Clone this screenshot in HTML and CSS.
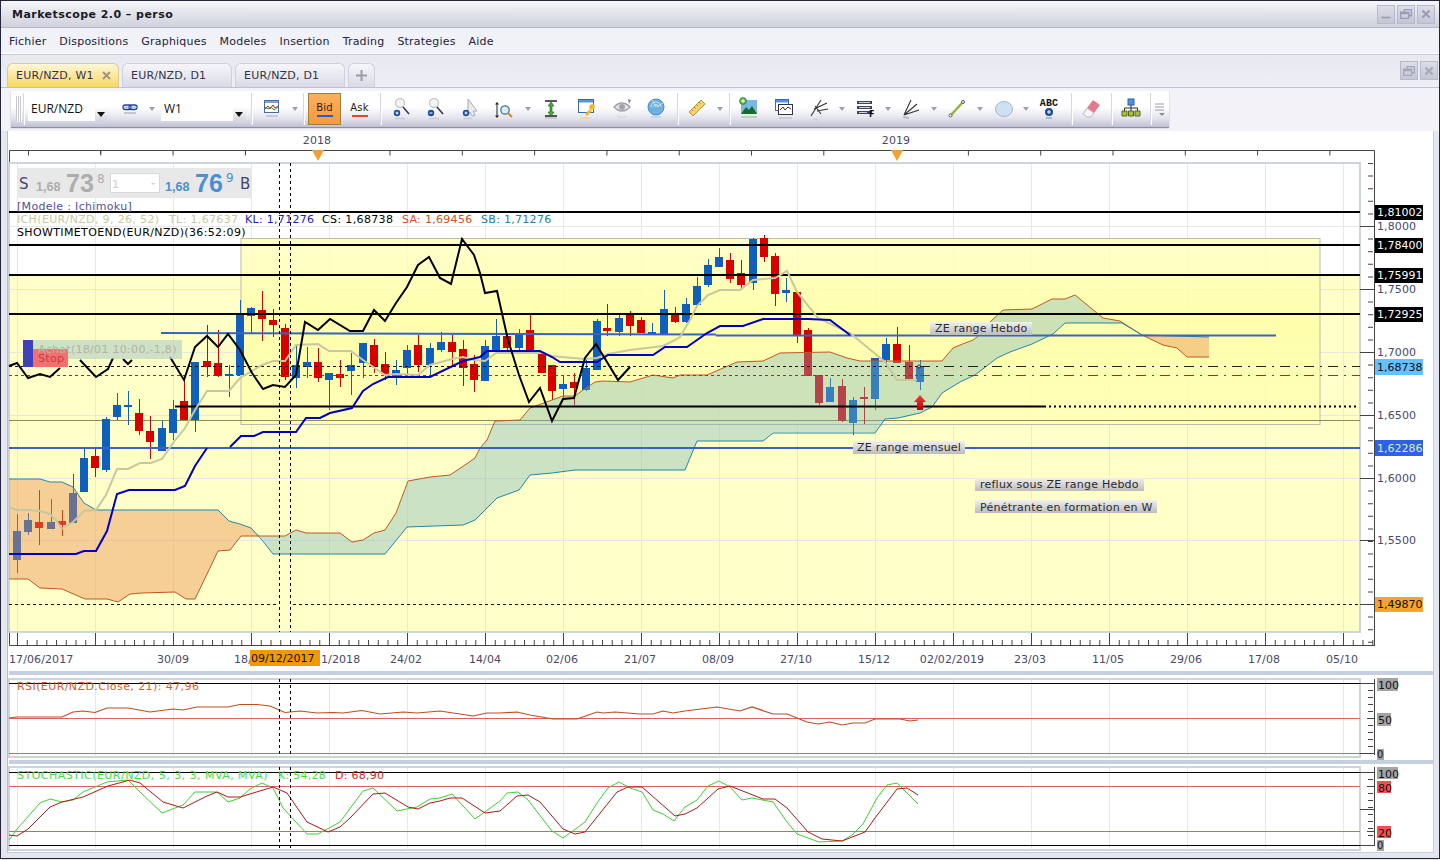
FILE: index.html
```html
<!DOCTYPE html>
<html lang="fr">
<head>
    <meta charset="UTF-8">
    <title>Marketscope 2.0 - perso</title>
    <link rel="stylesheet" href="styles.css">
</head>
<body>
<div class="window">
    <div class="titlebar">
        <span class="title">Marketscope 2.0 – perso</span>
        <div class="win-btns">
            <div class="win-btn"><svg width="18" height="18" viewBox="0 0 18 18"><path d="M4 12h10v2H4z" fill="#9a9db4"/></svg></div>
            <div class="win-btn"><svg width="18" height="18" viewBox="0 0 18 18"><path d="M7 6V4h8v7h-3M3 7h9v7H3zM3 8.500h9" fill="none" stroke="#9a9db4" stroke-width="1.500"/></svg></div>
            <div class="win-btn"><svg width="18" height="18" viewBox="0 0 18 18"><path d="M5 5l8 8M13 5l-8 8" stroke="#9a9db4" stroke-width="2.500"/></svg></div>
        </div>
    </div>

    <div class="menubar">
        <span>Fichier</span><span>Dispositions</span><span>Graphiques</span><span>Modeles</span><span>Insertion</span><span>Trading</span><span>Strategies</span><span>Aide</span>
    </div>

    <div class="tabstrip">
        <div class="tab active">EUR/NZD, W1<svg class="tab-close" width="9" height="9" viewBox="0 0 9 9"><path d="M1 1l7 7M8 1L1 8" stroke="#9c9488" stroke-width="2"/></svg></div>
        <div class="tab">EUR/NZD, D1</div>
        <div class="tab">EUR/NZD, D1</div>
        <div class="tab tab-add"><svg width="13" height="13" viewBox="0 0 13 13"><path d="M6.500 1v11M1 6.500h11" stroke="#9a9aa8" stroke-width="2"/></svg></div>
        <div class="win-btns">
            <div class="win-btn"><svg width="18" height="18" viewBox="0 0 18 18"><path d="M7 6V4h8v7h-3M3 7h9v7H3zM3 8.500h9" fill="none" stroke="#a4a7ba" stroke-width="1.500"/></svg></div>
            <div class="win-btn"><svg width="18" height="18" viewBox="0 0 18 18"><path d="M5 5l8 8M13 5l-8 8" stroke="#a4a7ba" stroke-width="2.500"/></svg></div>
        </div>
    </div>

    <div class="toolstrip">
        <div class="toolbar">
            <div class="grip"></div>
            <div class="tb-sep"></div>
            <div class="combo combo-pair"><span>EUR/NZD</span><i class="combo-arrow"></i></div>
            <div class="tb-cell"><svg width="20" height="20" viewBox="0 0 20 20"><g fill="none" stroke="#27408b" stroke-width="1.300"><rect x="3" y="6" width="8" height="4.500" rx="2.200"/><rect x="9" y="6" width="8" height="4.500" rx="2.200"/></g><path d="M3 8.200h14" stroke="#7fa0d0"/><path d="M4 14h12" stroke="#c4c6d4" stroke-width="2"/></svg></div>
            <div class="tb-cell"><i class="caret"></i></div>
            <div class="combo combo-period"><span>W1</span><i class="combo-arrow"></i></div>
            <div class="tb-sep"></div>
            <div class="tb-cell"><svg width="20" height="22" viewBox="0 0 20 22"><rect x="2.500" y="2.500" width="14" height="12" fill="#fff" stroke="#4a6aa8"/><path d="M3 3h13v2H3z" fill="#7fa0d8"/><path d="M3 11l3-3 2 3 3-4 2 3 3-2" fill="none" stroke="#d02020"/><path d="M3 9l3 2 3-2 3 3 4-3" fill="none" stroke="#20a020"/><path d="M4 18h12" stroke="#c8cad8" stroke-width="2"/></svg></div>
            <div class="tb-cell"><i class="caret"></i></div>
            <div class="tb-sep"></div>
            <div class="price-btn active"><span>Bid</span><i class="price-bar bar-bid"></i></div>
            <div class="price-btn"><span>Ask</span><i class="price-bar bar-ask"></i></div>
            <div class="tb-sep"></div>

            <div class="tb-cell"><svg width="22" height="24" viewBox="0 0 22 24"><circle cx="10" cy="6" r="4.500" fill="#f4f4f6" stroke="#c8c8ce" stroke-width="1.400"/><path d="M13 10l6 7" stroke="#3a3a40" stroke-width="1.600"/><circle cx="7" cy="16" r="3.200" fill="#1c4c9c"/><path d="M7 14.500v3M5.500 16h3" stroke="#fff"/><path d="M5 21.500h10" stroke="#c8cad8" stroke-width="1.500"/></svg></div>
            <div class="tb-cell"><svg width="22" height="24" viewBox="0 0 22 24"><circle cx="10" cy="6" r="4.500" fill="#f4f4f6" stroke="#c8c8ce" stroke-width="1.400"/><path d="M13 10l6 7" stroke="#3a3a40" stroke-width="1.600"/><circle cx="7" cy="16" r="3.200" fill="#1c4c9c"/><path d="M5.500 16h3" stroke="#fff"/><path d="M5 21.500h10" stroke="#c8cad8" stroke-width="1.500"/></svg></div>
            <div class="tb-cell"><svg width="22" height="24" viewBox="0 0 22 24"><path d="M9 2l9 12h-4l2 4-3 1-2-4-2 3z" fill="#ececf0" stroke="#a8a8b0"/><circle cx="7" cy="16" r="3.200" fill="#1c4c9c"/><path d="M7 14.500v3M5.500 16h3" stroke="#fff"/><path d="M5 21.500h8" stroke="#c8cad8" stroke-width="1.500"/></svg></div>
            <div class="tb-cell"><svg width="22" height="24" viewBox="0 0 22 24"><path d="M4 6v14" stroke="#222"/><path d="M2 7.500L4 5l2 2.500zM2 18.500L4 21l2-2.500z" fill="#222"/><circle cx="12" cy="13" r="4.200" fill="#d8eef0" stroke="#487888" stroke-width="1.300"/><path d="M15 16l4 4" stroke="#d08820" stroke-width="2"/></svg></div>
            <div class="tb-cell"><i class="caret"></i></div>
            <div class="tb-cell"><svg width="22" height="24" viewBox="0 0 22 24"><path d="M5 4h12M5 19h12" stroke="#222" stroke-width="1.600"/><path d="M11 5l3 4h-2v6h2l-3 4-3-4h2V9H8z" fill="#48a838" stroke="#206018" stroke-width=".6"/><path d="M5 21h12" stroke="#c8cad8" stroke-width="2"/></svg></div>
            <div class="tb-cell"><svg width="22" height="24" viewBox="0 0 22 24"><rect x="2.500" y="2.500" width="15" height="13" fill="#fff" stroke="#3868b8"/><path d="M3 3h14v2.500H3z" fill="#5c90e0"/><circle cx="16" cy="10" r="2.800" fill="#f0b820"/><path d="M14 12l-5 5 2 2 5-5" fill="#f0b820"/><path d="M4 21h10" stroke="#e8d8b0" stroke-width="2"/></svg></div>
            <div class="tb-cell"><svg width="22" height="24" viewBox="0 0 22 24"><path d="M2 10q8-8 16 0-8 8-16 0z" fill="#e8e8ec" stroke="#a0a0a8" stroke-width="1.400"/><circle cx="10" cy="10" r="3" fill="#a4a4ac"/><path d="M16 2l3 1-2 4" fill="#888"/><path d="M5 19q5 3 10 0" fill="none" stroke="#d8d8e0" stroke-width="1.500"/></svg></div>
            <div class="tb-cell"><svg width="22" height="24" viewBox="0 0 22 24"><circle cx="11" cy="10" r="8" fill="#70b0e0" stroke="#4c8cc0"/><path d="M11 10l7-4M11 10l-4-7M6 10a5 5 0 0 1 10 0M8.500 10a2.500 2.500 0 0 1 5 0" fill="none" stroke="#c4e0f4"/><path d="M6 20h10" stroke="#bcd8ec" stroke-width="2"/></svg></div>
            <div class="tb-sep"></div>

            <div class="tb-cell"><svg width="22" height="24" viewBox="0 0 22 24"><path d="M15 3l4 4L7 19l-4-4z" fill="#f4d468" stroke="#b89838"/><path d="M13 5l1.500 1.500M10.500 7.500L12 9M8 10l1.500 1.500M5.500 12.500L7 14" stroke="#a08020"/></svg></div>
            <div class="tb-cell"><i class="caret"></i></div>
            <div class="tb-sep"></div>
            <div class="tb-cell"><svg width="22" height="24" viewBox="0 0 22 24"><rect x="3" y="3" width="16" height="14" fill="#78b8e8"/><path d="M3 17l5-7 3 3 3-4 5 8z" fill="#186c28"/><circle cx="5" cy="4" r="3.500" fill="#50b840" stroke="#287820" stroke-width=".6"/><path d="M5 2v4M3 4h4" stroke="#fff"/><path d="M3 20h16" stroke="#b8d0b8" stroke-width="2"/></svg></div>
            <div class="tb-cell"><svg width="22" height="24" viewBox="0 0 22 24"><rect x="2.500" y="2.500" width="13" height="11" fill="#fff" stroke="#3868b8"/><path d="M3 3h12v2.500H3z" fill="#5c90e0"/><rect x="5.500" y="7.500" width="14" height="10" fill="#fff" stroke="#334"/><path d="M7 13l3-3 2 3 3-3 3 2" fill="none" stroke="#334"/><path d="M6 21h13" stroke="#c8cad8" stroke-width="2"/></svg></div>
            <div class="tb-cell"><svg width="22" height="24" viewBox="0 0 22 24"><path d="M3 19L13 3M6 12L19 6M9 14L20 12M7 9l6 8" stroke="#333" stroke-width="1.100" fill="none"/><path d="M6 22l4 1" stroke="#c8cad8" stroke-width="1.500"/></svg></div>
            <div class="tb-cell"><i class="caret"></i></div>
            <div class="tb-cell"><svg width="22" height="24" viewBox="0 0 22 24"><path d="M2 4h15v3H2zM2 9h15v3H2zM2 14h15v3H2z" fill="#3c4858"/><path d="M4 5.500h11M4 10.500h11M4 15.500h8" stroke="#c8d0d8"/><text class="icon-letter" x="14" y="20">F</text></svg></div>
            <div class="tb-cell"><i class="caret"></i></div>
            <div class="tb-cell"><svg width="22" height="24" viewBox="0 0 22 24"><path d="M4 18L11 3M4 18L17 7M4 18L19 13" stroke="#333" stroke-width="1.100" fill="none"/><path d="M3 20l6 1" stroke="#b8bac8" stroke-width="2"/></svg></div>
            <div class="tb-cell"><i class="caret"></i></div>
            <div class="tb-cell"><svg width="22" height="24" viewBox="0 0 22 24"><path d="M5 18L17 5" stroke="#8cb830" stroke-width="2.400"/><circle cx="4.500" cy="18.500" r="1.500" fill="#fff" stroke="#555"/><circle cx="17" cy="5" r="1.500" fill="#fff" stroke="#555"/></svg></div>
            <div class="tb-cell"><i class="caret"></i></div>
            <div class="tb-cell"><svg width="22" height="24" viewBox="0 0 22 24"><ellipse cx="11" cy="12" rx="8.500" ry="7.500" fill="#cfe0f2" stroke="#a4b8d0"/></svg></div>
            <div class="tb-cell"><i class="caret"></i></div>
            <div class="tb-cell"><svg width="22" height="24" viewBox="0 0 22 24"><text class="icon-abc" x="11" y="9">ABC</text><circle cx="11" cy="15" r="4" fill="#1c4c9c"/><path d="M11 13v4M9 15h4" stroke="#fff"/><path d="M8 21h6" stroke="#a8b8d8" stroke-width="2"/></svg></div>
            <div class="tb-sep"></div>
            <div class="tb-cell"><svg width="22" height="24" viewBox="0 0 22 24"><path d="M13 3l7 5-6 8-7-5z" fill="#e87890"/><path d="M7 11l7 5-3 4H7l-4-3z" fill="#f4f4f4" stroke="#b8b8c0"/></svg></div>
            <div class="tb-sep"></div>
            <div class="tb-cell"><svg width="22" height="24" viewBox="0 0 22 24"><rect x="8" y="2" width="6" height="6" fill="#4c94e0" stroke="#2860a8"/><path d="M11 8v3M4.500 14v-3h13v3M11 11v3" fill="none" stroke="#333"/><path d="M2 14h5v5H2zM8.500 14h5v5h-5zM15 14h5v5h-5z" fill="#a8c038" stroke="#586818"/></svg></div>
            <div class="tb-sep"></div>
            <div class="tb-cell"><svg width="12" height="16" viewBox="0 0 12 16"><path d="M1 3h9M1 6h9M1 9h9" stroke="#9a9aa4"/><path d="M5 12h6l-3 3z" fill="#8a8a96"/></svg></div>
        </div>
    </div>

    <div class="charts">
        <svg class="chart chart-main" width="1424" height="540" viewBox="8 131 1424 540">
            <defs>
                <linearGradient id="zoneFill" x1="0" y1="0" x2="0" y2="1">
                    <stop offset="0" stop-color="#ffffc0" stop-opacity=".85"/>
                    <stop offset=".5" stop-color="#ffffa8" stop-opacity=".85"/>
                    <stop offset="1" stop-color="#ffffb8" stop-opacity=".85"/>
                </linearGradient>
                <linearGradient id="labelFill" x1="0" y1="0" x2="0" y2="1">
                    <stop offset="0" stop-color="#f0f0f0"/>
                    <stop offset="1" stop-color="#bcbcbc"/>
                </linearGradient>
                <linearGradient id="arrowFill" x1="0" y1="0" x2="0" y2="1">
                    <stop offset="0" stop-color="#f04040"/>
                    <stop offset="1" stop-color="#b80000"/>
                </linearGradient>
            </defs>

            <!-- top time ruler -->
            <text class="axis-label" x="317" y="144" text-anchor="middle">2018</text>
            <text class="axis-label" x="896" y="144" text-anchor="middle">2019</text>
            <path class="axis" d="M9.500 162V150.500H1374.500V646"/>
            <line class="ticks" x1="28" y1="153" x2="1374" y2="153" stroke-dasharray="1 71.300"/>
            <path class="axis" d="M100.500 150v4M245.500 150v4"/>

            <!-- plot background -->
            <rect class="plot-bg" x="9" y="163" width="1351" height="469"/>
            <rect class="plot-yellow" x="9" y="274" width="1351" height="358"/>
            <path class="grid" d="M17.500 163V632M95.500 163V632M173.500 163V632M251.500 163V632M329.500 163V632M407.500 163V632M485.500 163V632M563.500 163V632M641.500 163V632M719.500 163V632M797.500 163V632M875.500 163V632M953.500 163V632M1031.500 163V632M1109.500 163V632M1187.500 163V632M1265.500 163V632M1343.500 163V632"/>
            <path class="grid" d="M9 226.500H1360M9 289.500H1360M9 352.500H1360M9 415.500H1360M9 478.500H1360M9 540.500H1360"/>
            <rect class="zone" x="241" y="238.500" width="1079" height="186"/>
            <rect class="plot-frame" x="9" y="163" width="1351" height="469"/>
            <line class="line-olive" x1="9" y1="420.500" x2="1360" y2="420.500"/>

            <!-- candles -->
            <path class="wick-blue" d="M17 514V573M28 513V535M51 499V529M73 474V523M84 448V492M106 417V472M117 393V420M128 391V425M162 421V451M173 400V440M195 362V432M229 365V397M240 300V375M251 307V333M296 345V388M307 347V378M329 373V410M351 353V395M363 343V378M396 360V385M407 345V378M430 343V378M441 332V352M485 340V381M496 319V351M519 329V353M563 375V400M586 360V391M597 319V370M619 315V336M652 323V335M664 290V335M686 298V323M697 277V305M708 259V287M719 248V267M753 238V290M786 278V302M830 378V402M853 397V435M875 358V410M886 338V366M920 360V390"/>
            <path class="wick-red" d="M39 490V545M62 510V536M95 449V477M139 399V435M150 416V459M184 380V420M207 325V377M218 330V377M262 291V341M273 309V337M285 324V380M318 348V382M340 360V387M374 339V373M385 352V380M418 335V372M452 335V365M463 340V386M474 355V392M507 336V350M530 315V350M542 354V373M552 365V400M574 373V405M607 304V336M630 311V336M641 317V333M675 307V323M730 253V283M741 260V290M764 235V262M775 253V306M797 292V343M808 328V376M819 375V405M842 379V422M864 387V424M897 327V363M909 345V380"/>
            <path class="body-blue" d="M13 531h8V560h-8zM24 520h8V532h-8zM47 522h8V529h-8zM69 493h8V523h-8zM80 458h8V492h-8zM102 419h8V470h-8zM113 405h8V417h-8zM124 405h8V407h-8zM158 428h8V451h-8zM169 409h8V433h-8zM191 362h8V420h-8zM225 374h8V376h-8zM236 314h8V375h-8zM247 308h8V316h-8zM292 365h8V378h-8zM303 362h8V367h-8zM325 373h8V380h-8zM347 365h8V371h-8zM359 343h8V363h-8zM392 370h8V376h-8zM403 350h8V368h-8zM426 348h8V365h-8zM437 342h8V350h-8zM481 346h8V381h-8zM492 336h8V351h-8zM515 334h8V348h-8zM559 384h8V389h-8zM582 368h8V390h-8zM593 321h8V370h-8zM615 318h8V332h-8zM648 332h8V335h-8zM660 309h8V335h-8zM682 304h8V322h-8zM693 286h8V305h-8zM704 265h8V285h-8zM715 257h8V267h-8zM749 239h8V283h-8zM782 290h8V293h-8zM826 387h8V402h-8zM849 400h8V423h-8zM871 358h8V399h-8zM882 344h8V360h-8zM916 367h8V382h-8z"/>
            <path class="body-red" d="M35 522h8V528h-8zM58 521h8V525h-8zM91 456h8V468h-8zM135 413h8V431h-8zM146 431h8V442h-8zM180 401h8V420h-8zM203 361h8V367h-8zM214 363h8V376h-8zM258 310h8V319h-8zM269 320h8V325h-8zM281 328h8V377h-8zM314 362h8V378h-8zM336 374h8V378h-8zM370 345h8V367h-8zM381 364h8V374h-8zM414 345h8V365h-8zM448 342h8V352h-8zM459 349h8V368h-8zM470 364h8V380h-8zM503 336h8V348h-8zM526 330h8V350h-8zM538 354h8V373h-8zM548 365h8V391h-8zM570 382h8V388h-8zM603 328h8V331h-8zM626 315h8V326h-8zM637 320h8V333h-8zM671 314h8V322h-8zM726 260h8V279h-8zM737 273h8V285h-8zM760 238h8V257h-8zM771 256h8V294h-8zM793 292h8V335h-8zM804 330h8V376h-8zM815 375h8V403h-8zM838 386h8V421h-8zM860 397h8V399h-8zM893 344h8V363h-8zM905 362h8V380h-8z"/>

            <!-- ichimoku cloud -->
            <path class="cloud-orange" d="M9 479H40L50 482H62L73 487L84 503L96 510H218L229 521L240 524L251 528L260 536L241 536L230 550L218 551L208 572L195 599H186L175 592L142 593L130 594L118 602L107 599H85L62 589L40 588L28 579H9Z"/>
            <path class="cloud-green" d="M260 536H285L296 530L306 533H340L352 542L363 540L374 533L385 530L396 513L408 481L430 477L450 475L462 467L475 458L480 448L487 440L495 421L520 420L530 408L563 396H575L583 390L595 382L603 381L630 382L653 375L673 378L680 375H707L737 362L763 361L780 353L830 352L847 358L860 361H942L953 348L960 345L973 340L977 337L990 322L1003 310L1032 309L1052 299H1065L1075 295L1103 318L1120 321L1142 335L1122 323H1065L1053 334L1032 344L1010 352L997 358L975 375L960 382L942 393L932 407L920 413L898 418L885 419L875 432H773L763 441H697L685 470H575L552 473L530 475L519 490L497 498L475 520L463 525L407 527L385 554H273Z"/>
            <path class="cloud-orange" d="M1142 335L1209 337V357H1187L1177 348L1163 345Z"/>
            <path class="line-sa" d="M9 579H28L40 588L62 589L85 599H107L118 602L130 594L142 593L175 592L186 599H195L208 572L218 551L230 550L241 536H285L296 530L306 533H340L352 542L363 540L374 533L385 530L396 513L408 481L430 477L450 475L462 467L475 458L480 448L487 440L495 421L520 420L530 408L563 396H575L583 390L595 382L603 381L630 382L653 375L673 378L680 375H707L737 362L763 361L780 353L830 352L847 358L860 361H942L953 348L960 345L973 340L977 337L990 322L1003 310L1032 309L1052 299H1065L1075 295L1103 318L1120 321L1142 335L1163 345L1177 348L1187 357H1209"/>
            <path class="line-sb" d="M9 479H40L50 482H62L73 487L84 503L96 510H218L229 521L240 524L251 528L262 540L273 554H385L407 527L463 525L475 520L497 498L519 490L530 475L552 473L575 470H685L697 441H763L773 433H875L885 419L898 418L920 413L932 407L942 393L960 382L975 375L997 358L1010 352L1032 344L1053 334L1065 323H1122L1142 335L1209 337"/>

            <!-- price levels -->
            <path class="level" d="M9 212H1360M9 245H1360M9 275H1360M9 314H1360"/>
            <path class="level" d="M175 406.500H1044"/>
            <line class="level-dots" x1="1044" y1="406.500" x2="1358" y2="406.500"/>
            <path class="level-blue" d="M161 333L716 334.500M716 335.500H1276M9 448H1360"/>
            <path class="dash-black" d="M9 366.500H920M9 604.500H276M293 604.500H1360"/>
            <path class="dash-red" d="M9 375.500H920"/>
            <path class="dashdot-black" d="M920 366.500H1360"/>
            <path class="dashdot-red" d="M920 375.500H1360"/>

            <path class="line-tl" d="M9 507L17 510H28L40 511L50 514L56 520L62 529L73 522L84 511L96 510L106 495L117 469H128L140 463H151L162 459L173 443L185 428L195 410L207 391H229L240 378L262 365L273 361H285L296 345L318 344L329 351H351L363 360L385 375L396 374L418 375L430 365L441 362L452 359L463 357L474 360L485 361L496 353H543L552 356L562 357L585 359L597 358L608 354L630 350L663 346L675 340L680 337L690 320L697 306L708 295L720 290H740L753 280L763 279L775 278L787 271L797 292L818 318L850 333L867 347L885 362L897 380H917"/>
            <path class="line-kl" d="M9 554H76L84 551H96L107 531L117 494L129 490H175L185 486L195 466L207 448M230 447L241 436H254L263 432H296L306 418H320L330 413L352 408L363 391L373 384L388 377H430L463 361L480 357L487 351H540L552 357L560 362H597L608 355H653L665 347H687L707 333L720 326H743L763 319H808L830 320L850 335"/>
            <path class="line-cs" d="M9 366L17 363L28 378L40 374L50 377L60 368M80 360L96 377L108 369L113 358M123 359L128 364L132 360M170 357L184 380L195 347L207 336L218 347L228 334L240 350L252 373L263 389L273 385L285 387L296 375L305 322L318 330L330 319L350 331H363L374 310L385 321L396 303L407 287L418 265L429 257L440 278L451 284L462 239L474 255L480 273L485 293L497 291L508 340L519 375L529 402L540 388L552 421L563 399L574 398L585 358L596 344L618 380L630 367"/>

            <path class="cursor" d="M279.500 163V632M290.500 163V632"/>

            <!-- order marker -->
            <rect class="order-tag" x="33" y="340" width="149" height="19"/>
            <rect class="order-bar" x="23" y="340" width="10" height="27"/>
            <rect class="order-stop" x="33" y="349" width="35" height="18"/>
            <text class="t-order" x="38" y="353">Achat(18/01 10:00,-1,8)</text>
            <text class="t-stop" x="38" y="362">Stop</text>

            <!-- trade widget -->
            <rect class="dealbox" x="17" y="168" width="235" height="30"/>
            <rect class="dealinput" x="110.500" y="173.500" width="49" height="19"/>
            <path class="dealcaret" d="M151 183h4l-2 2z"/>
            <text class="t-deal-side" x="19" y="189">S</text>
            <text class="t-deal-big grey" x="36" y="191">1,68</text>
            <text class="t-deal-pips grey" x="66" y="192">73</text>
            <text class="t-deal-sup grey" x="97" y="183">8</text>
            <text class="t-deal-amt" x="112" y="188">1</text>
            <text class="t-deal-big blue" x="165" y="191">1,68</text>
            <text class="t-deal-pips blue" x="195" y="192">76</text>
            <text class="t-deal-sup blue" x="226" y="182">9</text>
            <text class="t-deal-side" x="240" y="189">B</text>

            <text class="t-model" x="17" y="210">[Modele : Ichimoku]</text>
            <text class="t-tl" x="17" y="223">ICH(EUR/NZD, 9, 26, 52)</text>
            <text class="t-tl" x="169" y="223">TL: 1,67637</text>
            <text class="t-kl" x="245" y="223">KL: 1,71276</text>
            <text class="t-cs" x="322" y="223">CS: 1,68738</text>
            <text class="t-sa" x="402" y="223">SA: 1,69456</text>
            <text class="t-sb" x="481" y="223">SB: 1,71276</text>
            <text class="t-cs" x="17" y="236">SHOWTIMETOEND(EUR/NZD)(36:52:09)</text>

            <!-- notes on chart -->
            <rect class="note-bg" x="930" y="322" width="102" height="13"/>
            <text class="note" x="935" y="332">ZE range Hebdo</text>
            <rect class="note-bg" x="853" y="441" width="112" height="13"/>
            <text class="note" x="857" y="451">ZE range mensuel</text>
            <rect class="note-bg" x="975" y="478" width="169" height="13"/>
            <text class="note" x="980" y="488">reflux sous ZE range Hebdo</text>
            <rect class="note-bg" x="975" y="500" width="182" height="13"/>
            <text class="note" x="980" y="511">Pénétrante en formation en W</text>

            <path class="up-arrow" d="M920 395l6 7h-3v8h-6v-8h-3z"/>
            <circle class="marker" cx="919" cy="366.500" r="1.500"/>
            <path class="triangle" d="M312 150h12l-6 11zM891 150h12l-6 11z"/>

            <!-- price axis -->
            <line class="ticks" x1="1370.500" y1="163" x2="1370.500" y2="645" stroke-width="7" stroke-dasharray="1 11.600"/>
            <path class="axis" d="M1360 226.500h14M1360 289.500h14M1360 352.500h14M1360 415.500h14M1360 478.500h14M1360 540.500h14M1360 604.500h14"/>
            <text class="axis-label" x="1377" y="230">1,8000</text>
            <text class="axis-label" x="1377" y="293">1,7500</text>
            <text class="axis-label" x="1377" y="356">1,7000</text>
            <text class="axis-label" x="1377" y="419">1,6500</text>
            <text class="axis-label" x="1377" y="482">1,6000</text>
            <text class="axis-label" x="1377" y="544">1,5500</text>
            <rect class="tag-black" x="1375" y="205" width="48" height="15"/>
            <text class="tag-white" x="1377" y="216">1,81002</text>
            <rect class="tag-black" x="1375" y="238" width="48" height="15"/>
            <text class="tag-white" x="1377" y="249">1,78400</text>
            <rect class="tag-black" x="1375" y="268" width="48" height="15"/>
            <text class="tag-white" x="1377" y="279">1,75991</text>
            <rect class="tag-black" x="1375" y="307" width="48" height="15"/>
            <text class="tag-white" x="1377" y="318">1,72925</text>
            <rect class="tag-sky" x="1375" y="359" width="48" height="16"/>
            <text class="tag-dark" x="1377" y="371">1,68738</text>
            <rect class="tag-blue" x="1375" y="440" width="48" height="16"/>
            <text class="tag-lime" x="1377" y="452">1,62286</text>
            <rect class="tag-orange" x="1375" y="597" width="48" height="15"/>
            <text class="tag-dark" x="1377" y="608">1,49870</text>

            <!-- date axis -->
            <line class="ticks" x1="17" y1="642.500" x2="1374" y2="642.500" stroke-width="5" stroke-dasharray="1 8.750"/>
            <path class="axis" d="M9.500 633V645.500H1374M17.500 633v12M95.500 633v12M173.500 633v12M251.500 633v12M329.500 633v12M407.500 633v12M485.500 633v12M563.500 633v12M641.500 633v12M719.500 633v12M797.500 633v12M875.500 633v12M953.500 633v12M1031.500 633v12M1109.500 633v12M1187.500 633v12M1265.500 633v12M1343.500 633v12"/>
            <text class="axis-label" x="9" y="663">17/06/2017</text>
            <text class="axis-label" x="173" y="663" text-anchor="middle">30/09</text>
            <text class="axis-label" x="234" y="663">18/</text>
            <text class="axis-label" x="321" y="663">1/2018</text>
            <text class="axis-label" x="406" y="663" text-anchor="middle">24/02</text>
            <text class="axis-label" x="485" y="663" text-anchor="middle">14/04</text>
            <text class="axis-label" x="562" y="663" text-anchor="middle">02/06</text>
            <text class="axis-label" x="640" y="663" text-anchor="middle">21/07</text>
            <text class="axis-label" x="718" y="663" text-anchor="middle">08/09</text>
            <text class="axis-label" x="796" y="663" text-anchor="middle">27/10</text>
            <text class="axis-label" x="874" y="663" text-anchor="middle">15/12</text>
            <text class="axis-label" x="952" y="663" text-anchor="middle">02/02/2019</text>
            <text class="axis-label" x="1030" y="663" text-anchor="middle">23/03</text>
            <text class="axis-label" x="1108" y="663" text-anchor="middle">11/05</text>
            <text class="axis-label" x="1186" y="663" text-anchor="middle">29/06</text>
            <text class="axis-label" x="1264" y="663" text-anchor="middle">17/08</text>
            <text class="axis-label" x="1342" y="663" text-anchor="middle">05/10</text>
            <rect class="tag-date" x="250" y="650" width="70" height="16"/>
            <text class="tag-date-text" x="251" y="662">09/12/2017</text>
        </svg>

        <div class="splitter"></div>

        <svg class="chart chart-rsi" width="1424" height="85" viewBox="8 675 1424 85">
            <rect class="plot-frame" x="9" y="679" width="1351" height="78"/>
            <path class="grid" d="M17.500 679V757M95.500 679V757M173.500 679V757M251.500 679V757M329.500 679V757M407.500 679V757M485.500 679V757M563.500 679V757M641.500 679V757M719.500 679V757M797.500 679V757M875.500 679V757M953.500 679V757M1031.500 679V757M1109.500 679V757M1187.500 679V757M1265.500 679V757M1343.500 679V757"/>
            <path class="limit-black" d="M9 683.500H1360"/>
            <path class="limit-red" d="M9 718.500H1360M9 753.500H1360"/>
            <path class="line-rsi" d="M9 718L17 717H62L73 712L83 711L95 712.500L107 708H128L150 712L173 709L183 710L197 707H228L240 704.500H257L270 706L285 712.500L300 711L317 713L333 712.500L343 713L362 710.500L380 714L403 712L417 713L440 711L473 716L487 713H500L517 712L530 715L553 719H577L597 712L603 713L615 712L640 714H653L663 711L673 713L685 711L717 707L740 711L752 707L773 714H787L807 722L818 724L830 722L842 725L853 723H865L875 719H888L900 719L910 721L918 720"/>
            <path class="cursor" d="M279.500 679V755M290.500 679V755"/>
            <text class="t-rsi" x="17" y="690">RSI(EUR/NZD.Close, 21): 47,96</text>
            <path class="axis" d="M1374.500 679V755M1360 683.500h14M1367 718.500h7M1360 753.500h14"/>
            <line class="ticks" x1="1370.500" y1="690" x2="1370.500" y2="750" stroke-width="7" stroke-dasharray="1 6"/>
            <rect class="tag-grey" x="1377" y="678" width="21" height="13"/>
            <text class="tag-dark" x="1378" y="689">100</text>
            <rect class="tag-grey" x="1377" y="713" width="14" height="13"/>
            <text class="tag-dark" x="1378" y="724">50</text>
            <rect class="tag-grey" x="1377" y="749" width="7" height="11"/>
            <text class="tag-small" x="1377" y="758">0</text>
        </svg>

        <div class="splitter"></div>

        <svg class="chart chart-stoch" width="1424" height="87" viewBox="8 764 1424 87">
            <rect class="plot-frame" x="9" y="767" width="1351" height="83"/>
            <path class="grid" d="M17.500 767V850M95.500 767V850M173.500 767V850M251.500 767V850M329.500 767V850M407.500 767V850M485.500 767V850M563.500 767V850M641.500 767V850M719.500 767V850M797.500 767V850M875.500 767V850M953.500 767V850M1031.500 767V850M1109.500 767V850M1187.500 767V850M1265.500 767V850M1343.500 767V850"/>
            <path class="limit-black" d="M9 772.500H1360M9 845.500H1360"/>
            <path class="limit-red" d="M9 786.500H1360M9 831.500H1360"/>
            <path class="line-k" d="M9 840L17 829L40 803L50 799L62 802L73 800L83 792L95 787L107 782L128 780L140 792L162 813L183 805L195 792H217L228 802L240 798L250 789L262 783L273 788L283 808L307 834H318L340 822L363 791L373 788L397 811L417 807L430 799L440 798L452 794L475 819L500 801L507 793L518 792L528 800L552 831L563 838L585 822L597 803L608 788L619 782L630 788L642 792L653 810L663 814L674 821L685 807L697 800L708 786L719 781L730 787L742 800L752 798L773 802L787 822L797 834L819 842L842 841L852 835L863 824L877 798L887 785L897 783L918 804"/>
            <path class="line-d" d="M9 835L17 836L28 829L50 807L62 802L83 797L108 786L130 780L140 783L163 802L183 808L207 796L217 792L228 797L240 797L273 787L287 793L307 822L328 832L340 827L350 818L373 794L385 793L408 807L418 809L430 803L440 801L450 798H462L485 813L500 811L517 796L528 795L540 802L563 829L575 834L585 832L617 792L628 787L642 787L675 816L685 814L697 808L718 789L730 786L763 799H775L787 808L808 832L822 839L842 841L865 832L875 818L897 789L907 788L918 795"/>
            <path class="cursor" d="M279.500 767V849M290.500 767V849"/>
            <text class="t-stoch" x="17" y="779">STOCHASTIC(EUR/NZD, 5, 3, 3, MVA, MVA)</text>
            <text class="t-stoch-k" x="278" y="779">K: 54,28</text>
            <text class="t-stoch-d" x="335" y="779">D: 68,90</text>
            <path class="axis" d="M1374.500 767V846M1360 772.500h14M1367 786.500h7M1360 809.500h14M1367 831.500h7M1360 845.500h14"/>
            <line class="ticks" x1="1370.500" y1="779" x2="1370.500" y2="842" stroke-width="7" stroke-dasharray="1 6"/>
            <rect class="tag-grey" x="1377" y="767" width="21" height="12"/>
            <text class="tag-dark" x="1378" y="778">100</text>
            <rect class="tag-red" x="1377" y="781" width="14" height="12"/>
            <text class="tag-dark" x="1378" y="792">80</text>
            <rect class="tag-red" x="1377" y="826" width="14" height="12"/>
            <text class="tag-dark" x="1378" y="837">20</text>
            <rect class="tag-grey" x="1377" y="840" width="7" height="11"/>
            <text class="tag-small" x="1377" y="849">0</text>
        </svg>
    </div>
</div>
</body>
</html>
```

FILE: styles.css
```css
* {
    margin: 0;
    padding: 0;
    box-sizing: border-box;
}

html, body {
    width: 1440px;
    height: 860px;
    overflow: hidden;
}

body {
    font-family: "DejaVu Sans", sans-serif;
    font-size: 11px;
    letter-spacing: .2px;
    color: #2c2c3c;
    background: #e4e6f0;
}

.window {
    height: 859px;
    display: flex;
    flex-direction: column;
    border: 1px solid #24263a;
    background: #e4e6f0;
}

/* title + menu */
.titlebar {
    height: 27px;
    display: flex;
    align-items: center;
    padding-left: 11px;
    background: linear-gradient(#f6f6fa, #cfd1dc);
    border-bottom: 1px solid #b4b6c4;
}

.title {
    font-weight: 700;
    font-size: 11px;
    letter-spacing: .45px;
    color: #1a1a26;
}

.win-btns {
    margin-left: auto;
    display: flex;
    gap: 2px;
    padding-right: 4px;
}

.win-btn {
    width: 18px;
    height: 19px;
    border: 1px solid #b8bacb;
    background: linear-gradient(#dcdde8, #c4c6d6);
    display: flex;
    align-items: center;
    justify-content: center;
}

.menubar {
    height: 27px;
    display: flex;
    align-items: center;
    gap: 13px;
    padding: 0 8px;
    background: #f1f1f8;
    border-bottom: 1px solid #cccdd8;
    box-shadow: inset 0 -2px 0 #f8f8fc;
    color: #24243a;
}

/* tabs */
.tabstrip {
    height: 33px;
    display: flex;
    align-items: flex-end;
    gap: 3px;
    padding-left: 6px;
    background: linear-gradient(#e8e8f1, #eeeef6);
    border-bottom: 1px solid #bfc0d0;
}

.tabstrip .win-btns {
    align-self: flex-start;
    padding-right: 1px;
    margin-top: 6px;
}

.tab {
    width: 110px;
    height: 24px;
    display: flex;
    align-items: center;
    padding-left: 8px;
    border: 1px solid #cfd0dc;
    border-bottom: 0;
    border-radius: 6px 6px 0 0;
    background: linear-gradient(#f6f6fa, #d9dae6);
    color: #33334a;
}

.tab.active {
    width: 112px;
    background: linear-gradient(#fff7d8, #f6d85c);
    border-color: #d8cc98;
}

.tab-close {
    margin-left: 8px;
}

.tab-add {
    width: 27px;
    padding: 0;
    justify-content: center;
}

/* toolbar */
.toolstrip {
    height: 43px;
    padding: 3px 0 0 10px;
    background: #f2f2f8;
}

.toolbar {
    height: 36px;
    width: 1158px;
    display: grid;
    grid-template-columns: 12px 1px 88px 36px 8px 95px 1px 40px 6px 10px 33px 37px 4px 38px 30px 40px 28px 20px 26px 46px 26px 40px 2px 38px 8px 10px 30px 40px 30px 16px 32px 12px 34px 12px 34px 12px 36px 8px 38px 6px 34px 6px 34px 4px 16px;
    align-items: center;
    background: linear-gradient(#fff 0, #fff 45%, #e4e4ee 75%, #bfc0d2 100%);
    box-shadow: 0 1px 1px #8c8ea4;
}

.grip {
    height: 26px;
    width: 6px;
    margin-left: 5px;
    background: repeating-linear-gradient(90deg, #c8c8d4 0 1px, #fff 1px 2px);
}

.tb-sep {
    justify-self: center;
    width: 1px;
    height: 32px;
    background: #d8d8e4;
    box-shadow: 1px 0 0 #fff;
}

.tb-cell {
    display: flex;
    align-items: center;
    justify-content: center;
    min-width: 0;
}

.caret {
    display: block;
    width: 0;
    height: 0;
    border: 3.500px solid transparent;
    border-top: 4px solid #a0a0ac;
    border-bottom: 0;
}

.combo {
    justify-self: center;
    height: 23px;
    background: #fff;
    position: relative;
    font-family: "Open Sans", sans-serif;
    font-size: 12px;
    letter-spacing: 0;
    line-height: 22px;
    padding-left: 3px;
    color: #111;
}

.combo-pair {
    width: 80px;
}

.combo-period {
    width: 85px;
}

.combo-arrow {
    position: absolute;
    right: 0;
    bottom: 0;
    width: 13px;
    height: 14px;
    background: linear-gradient(#fff, #d4d4dc);
}

.combo-arrow::after {
    content: "";
    position: absolute;
    left: 2px;
    top: 5px;
    border: 4px solid transparent;
    border-top: 5px solid #111;
    border-bottom: 0;
}

.price-btn {
    height: 32px;
    display: flex;
    flex-direction: column;
    align-items: center;
    justify-content: center;
    gap: 2px;
    font-size: 10px;
    color: #301c08;
}

.price-btn.active {
    background: linear-gradient(#fbb060, #f8993c);
    border: 1px solid #a08038;
}

.price-btn:not(.active) {
    justify-self: start;
    width: 37px;
}

.price-bar {
    display: block;
    width: 16px;
    height: 2px;
}

.bar-bid {
    background: #2060c8;
}

.bar-ask {
    background: #e04828;
}

.icon-letter {
    font: 700 8px "DejaVu Sans", sans-serif;
    fill: #111;
}

.icon-abc {
    font: 700 10px "Liberation Mono", monospace;
    fill: #111;
    text-anchor: middle;
}

/* chart panels */
.charts {
    flex: 1;
    margin: 0 5px 5px 6px;
    background: #fff;
    display: flex;
    flex-direction: column;
    border-left: 1px solid #b9bdd0;
    border-right: 1px solid #c8ccdc;
    border-bottom: 1px solid #c8ccdc;
}

.chart {
    display: block;
    flex: none;
    font-family: "DejaVu Sans", sans-serif;
    font-size: 11px;
    letter-spacing: 0;
}

.chart path, .chart line {
    fill: none;
}

.splitter {
    height: 4px;
    flex: none;
    margin-left: 1px;
    background: #c4d0e0;
}

.plot-bg {
    fill: #fff;
}

.plot-yellow {
    fill: #ffffc8;
}

.zone {
    fill: url(#zoneFill);
    stroke: #bcbcac;
}

.plot-frame {
    fill: none;
    stroke: #cdd4dc;
    stroke-width: 2;
}

.grid {
    stroke: #e2e2e6;
    stroke-opacity: .8;
}

.axis {
    stroke: #444;
}

.ticks {
    stroke: #444;
    stroke-width: 5;
}

.line-olive {
    stroke: #8c8c58;
}

/* candles */
.wick-blue {
    stroke: #1060c0;
    shape-rendering: crispEdges;
}

.wick-red {
    stroke: #d80000;
    shape-rendering: crispEdges;
}

.chart .body-blue {
    fill: #0f5fbd;
    shape-rendering: crispEdges;
}

.chart .body-red {
    fill: #d80000;
    shape-rendering: crispEdges;
}

.chart .cloud-orange {
    fill: rgba(230, 140, 80, .42);
}

.chart .cloud-green {
    fill: rgba(120, 180, 190, .38);
}

.line-sa {
    stroke: #c05820;
}

.line-sb {
    stroke: #2088a8;
}

/* levels */
.level {
    stroke: #000;
    stroke-width: 2;
}

.level-dots {
    stroke: #000;
    stroke-width: 2;
    stroke-dasharray: 2 3;
}

.level-blue {
    stroke: #3a62c4;
    stroke-width: 2;
}

.dash-black {
    stroke: #111;
    stroke-dasharray: 3 3;
}

.dash-red {
    stroke: #c02020;
    stroke-dasharray: 3 3;
}

.dashdot-black {
    stroke: #222;
    stroke-dasharray: 10 6 2 6;
}

.dashdot-red {
    stroke: #c02020;
    stroke-dasharray: 10 6 2 6;
}

.cursor {
    stroke: #000;
    stroke-dasharray: 3 3;
}

.line-tl {
    stroke: #c8c8a0;
    stroke-width: 2;
}

.line-kl {
    stroke: #0000c0;
    stroke-width: 2;
}

.line-cs {
    stroke: #000;
    stroke-width: 2;
}

.order-tag {
    fill: rgba(190, 215, 195, .75);
}

.order-bar {
    fill: #4040b8;
}

.order-stop {
    fill: #f47070;
}

.t-order {
    fill: #b4b4a0;
    letter-spacing: .3px;
}

.t-stop {
    fill: #c04040;
    letter-spacing: .3px;
}

/* trade widget */
.dealbox {
    fill: #e8e8e8;
}

.dealinput {
    fill: #fff;
    stroke: #d8d8d8;
}

.chart .dealcaret {
    fill: #ccc;
}

.t-deal-side {
    font-size: 15px;
    fill: #44446c;
}

.t-deal-big {
    font-family: "Liberation Sans", sans-serif;
    font-size: 12.500px;
    font-weight: 700;
}

.t-deal-pips {
    font-family: "Liberation Sans", sans-serif;
    font-size: 25px;
    font-weight: 700;
}

.t-deal-sup {
    font-size: 12px;
}

.t-deal-amt {
    fill: #ccc;
}

.grey {
    fill: #adadad;
}

.blue {
    fill: #4a90d0;
}

.t-model {
    fill: #5050a0;
    letter-spacing: .33px;
}

.t-tl {
    fill: #c8c8a0;
    letter-spacing: .35px;
}

.t-kl {
    fill: #2020c0;
    letter-spacing: .3px;
}

.t-cs {
    fill: #000;
    letter-spacing: .36px;
}

.t-sa {
    fill: #d05020;
    letter-spacing: .3px;
}

.t-sb {
    fill: #2080b0;
    letter-spacing: .3px;
}

.note-bg {
    fill: url(#labelFill);
}

.note {
    fill: #2a2a2a;
    letter-spacing: .23px;
}

.chart .up-arrow {
    fill: url(#arrowFill);
}

.marker {
    fill: none;
    stroke: #333;
}

.chart .triangle {
    fill: #f4a030;
}

/* axis labels */
.axis-label {
    fill: #48486c;
    letter-spacing: .1px;
}

.tag-black {
    fill: #000;
}

.tag-white {
    fill: #fff;
}

.tag-sky {
    fill: #64c0ff;
}

.tag-blue {
    fill: #3060e8;
}

.tag-lime {
    fill: #d4f0a0;
}

.tag-orange {
    fill: #f4a428;
}

.tag-dark {
    fill: #111;
}

.tag-small {
    fill: #111;
    font-size: 10px;
}

.tag-date {
    fill: #f49800;
}

.tag-date-text {
    fill: #111;
}

.tag-grey {
    fill: #a4a4a4;
}

.tag-red {
    fill: #f05050;
}

/* indicators */
.limit-black {
    stroke: #000;
}

.limit-red {
    stroke: #e06060;
}

.line-rsi {
    stroke: #b85020;
    stroke-width: 1.200;
}

.line-k {
    stroke: #40d030;
}

.line-d {
    stroke: #b01818;
}

.t-rsi {
    fill: #d06030;
    letter-spacing: .42px;
}

.t-stoch {
    fill: #40e040;
    letter-spacing: .47px;
}

.t-stoch-k {
    fill: #40e040;
    letter-spacing: .25px;
}

.t-stoch-d {
    fill: #e02020;
    letter-spacing: .25px;
}
```
